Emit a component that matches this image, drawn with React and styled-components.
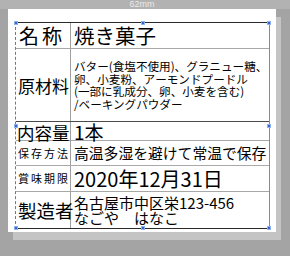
import React from 'react';
import styled, { createGlobalStyle } from 'styled-components';

const Global = createGlobalStyle`
  body {
    margin: 0;
    background: #a4a4a4;
    font-family: "Noto Sans CJK JP", "Noto Sans", sans-serif;
  }
`;

const Desk = styled.div`
  width: 290px;
  height: 256px;
  overflow: hidden;
  background: #a4a4a4;
`;

const Ruler = styled.div`
  height: 9px;
  background: #b2b2b2;
  color: #ebebeb;
  font-family: "Liberation Sans", sans-serif;
  font-size: 9px;
  line-height: 9px;
  text-align: center;
  padding-right: 6px;
`;

const Sheet = styled.div`
  margin-left: 8px;
  width: 268px;
  height: 223px;
  box-sizing: border-box;
  padding: 13px 6px 0 7px;
  background: #fff;
  box-shadow: 5px 8px 0 #c4c4c4;
`;

const Label = styled.div`
  position: relative;
  width: 255px;
  box-sizing: border-box;
  border-top: 1px solid #2a2a2a;
  border-bottom: 1px solid #2a2a2a;
  border-left: 1px dashed #777;
  border-right: 1px solid #8a8a8a;
  color: #000;
`;

const Row = styled.div`
  display: grid;
  grid-template-columns: 55px 1fr;
  height: ${p => p.$h}px;
  box-sizing: border-box;
  border-bottom: ${p => (p.$last ? 'none' : `1px solid ${p.$line || '#a8a8a8'}`)};
`;

const Key = styled.div`
  display: flex;
  align-items: center;
  box-sizing: border-box;
  padding: 0 ${p => p.$pr ?? 2}px 0 ${p => p.$pl ?? 2}px;
  border-right: 1px solid #a0a0a0;
  font-size: ${p => p.$size}px;
  line-height: 1;
  white-space: nowrap;

  span {
    flex: 1;
    text-align: justify;
    text-align-last: justify;
  }
`;

const Value = styled.div`
  display: flex;
  flex-direction: column;
  justify-content: center;
  padding-left: 3px;
  font-size: ${p => p.$size}px;
  line-height: ${p => (p.$lh ? `${p.$lh}px` : 1.1)};
  white-space: nowrap;
`;

const Handle = styled.div`
  position: absolute;
  width: 4px;
  height: 4px;
  background: #3566d6;
  border: 1px solid #8fb0ee;
  box-sizing: border-box;
  left: ${p => p.$x};
  top: ${p => p.$y};
  transform: translate(-50%, -50%);
`;

const handles = [
  ['0%', '0%'], ['50%', '0%'], ['100%', '0%'],
  ['0%', '50%'], ['100%', '50%'],
  ['0%', '100%'], ['50%', '100%'], ['100%', '100%'],
];

export default function App() {
  return (
    <Desk>
      <Global />
      <Ruler>62mm</Ruler>
      <Sheet>
        <Label>
          <Row $h={26}>
            <Key $size={20} $pl={3} $pr={8}><span>名称</span></Key>
            <Value $size={20.5}>焼き菓子</Value>
          </Row>
          <Row $h={73} $line="#4a4a4a">
            <Key $size={17}><span>原材料</span></Key>
            <Value $size={11.6} $lh={12.5}>
              <div>バター(食塩不使用)、グラニュー糖、</div>
              <div>卵、小麦粉、アーモンドプードル</div>
              <div>(一部に乳成分、卵、小麦を含む)</div>
              <div>/ベーキングパウダー</div>
            </Value>
          </Row>
          <Row $h={19}>
            <Key $size={17.5} $pl={1} $pr={1}><span>内容量</span></Key>
            <Value $size={19}>1本</Value>
          </Row>
          <Row $h={25}>
            <Key $size={11}><span>保存方法</span></Key>
            <Value $size={14.8}>高温多湿を避けて常温で保存</Value>
          </Row>
          <Row $h={26}>
            <Key $size={11}><span>賞味期限</span></Key>
            <Value $size={20}>2020年12月31日</Value>
          </Row>
          <Row $h={36} $last>
            <Key $size={18.5}><span>製造者</span></Key>
            <Value $size={15} $lh={15}>
              <div>名古屋市中区栄123-456</div>
              <div>なごや　はなこ</div>
            </Value>
          </Row>
          {handles.map(([x, y]) => (
            <Handle key={x + y} $x={x} $y={y} />
          ))}
        </Label>
      </Sheet>
    </Desk>
  );
}
